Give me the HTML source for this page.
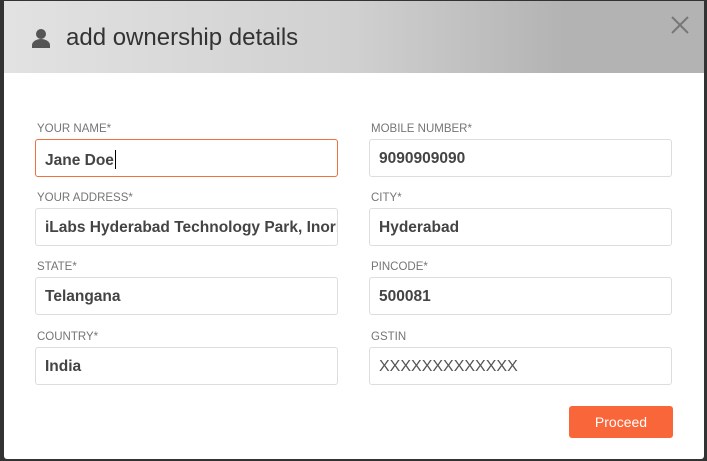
<!DOCTYPE html>
<html><head><style>
html,body{margin:0;padding:0;width:707px;height:461px;overflow:hidden;background:#333;font-family:"Liberation Sans",sans-serif}
.m{position:absolute;left:4px;top:1px;width:700px;height:458px;background:#fff;border-radius:0 0 3px 3px}
.h{position:absolute;left:0;top:0;width:700px;height:72px;background:linear-gradient(90deg,#e2e2e2 0%,#d0d0d0 50%,#b3b3b3 80%,#b3b3b3 100%)}
.t{position:absolute;left:62px;top:23px;font-size:24px;color:#333}
.x{position:absolute;left:666px;top:14px}
.l{position:absolute;font-size:11.5px;color:#757575}
.i{position:absolute;width:303px;height:38px;border:1px solid #ddd;border-radius:3px;box-sizing:border-box;font-size:15.5px;font-weight:bold;color:#444;padding:10px 0 0 9px;white-space:nowrap;overflow:hidden}
.b{position:absolute;left:565px;top:405px;width:104px;height:32px;background:#f96639;border-radius:3px;color:#fff;font-size:14px;text-align:center;line-height:32px}
.c{display:inline-block;width:1px;height:19px;background:#000;vertical-align:-4px;margin-left:1px}
</style></head><body>
<div class="m">
<div class="h">
<svg style="position:absolute;left:28px;top:27px" width="18" height="20" viewBox="0 0 18 20"><circle cx="9" cy="6" r="5" fill="#555"/><path d="M0 20v-3c0-3 4-6 9-6s9 3 9 6v3z" fill="#555"/></svg>
<div class="t">add ownership details</div>
<svg class="x" width="20" height="20" viewBox="0 0 20 20"><path d="M2 2L18 18M18 2L2 18" stroke="#777" stroke-width="2"/></svg>
</div>
<div class="l" style="left:33px;top:122px">YOUR NAME*</div>
<div class="i" style="left:31px;top:138px;border-color:#f07040">Jane Doe<span class="c"></span></div>
<div class="l" style="left:367px;top:122px">MOBILE NUMBER*</div>
<div class="i" style="left:365px;top:138px">9090909090</div>
<div class="l" style="left:33px;top:191px">YOUR ADDRESS*</div>
<div class="i" style="left:31px;top:207px">iLabs Hyderabad Technology Park, Inorbit</div>
<div class="l" style="left:367px;top:191px">CITY*</div>
<div class="i" style="left:365px;top:207px">Hyderabad</div>
<div class="l" style="left:33px;top:260px">STATE*</div>
<div class="i" style="left:31px;top:276px">Telangana</div>
<div class="l" style="left:367px;top:260px">PINCODE*</div>
<div class="i" style="left:365px;top:276px">500081</div>
<div class="l" style="left:33px;top:330px">COUNTRY*</div>
<div class="i" style="left:31px;top:346px">India</div>
<div class="l" style="left:367px;top:330px">GSTIN</div>
<div class="i" style="left:365px;top:346px;font-weight:normal;font-size:16px;color:#555">XXXXXXXXXXXXX</div>
<div class="b">Proceed</div>
</div>
</body></html>
